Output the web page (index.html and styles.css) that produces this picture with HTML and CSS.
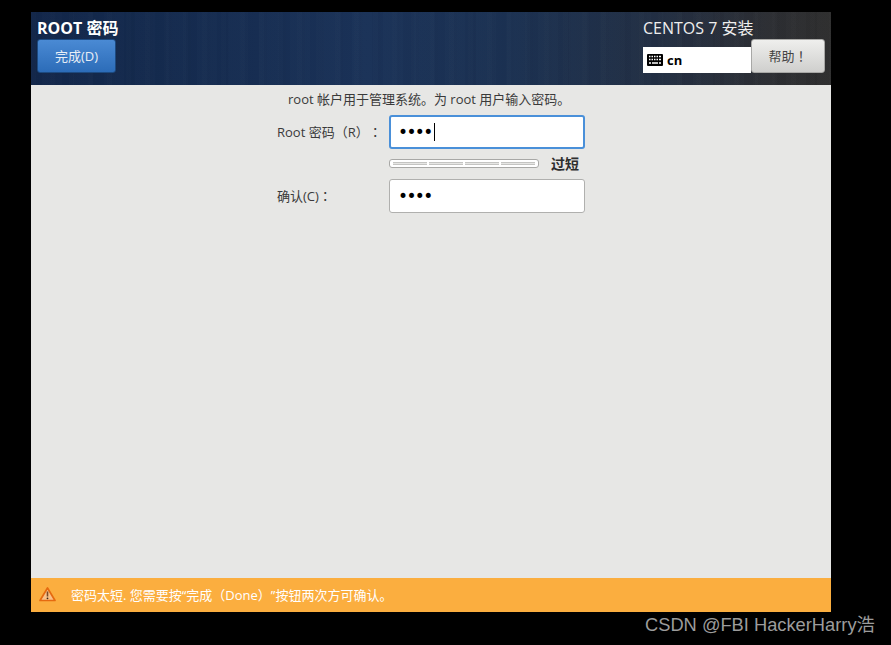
FILE: index.html
```html
<!DOCTYPE html>
<html lang="zh-CN">
<head>
    <meta charset="UTF-8">
    <title>ROOT 密码</title>
    <link rel="stylesheet" href="styles.css">
</head>
<body>
    <div class="window">
        <!-- Top bar -->
        <header class="topbar">
            <div class="spoke">
                <h1 class="spoke-title">ROOT 密码</h1>
                <button class="done-button">完成(D)</button>
            </div>
            <div class="product">
                <div class="product-title">CENTOS 7 安装</div>
                <div class="product-row">
                    <div class="layout-box">
                        <svg class="kb-icon" width="16" height="12" viewBox="0 0 16 12">
                            <rect x="0" y="0" width="16" height="12" rx="1" fill="#000"/>
                            <path d="M2 2.500h1.500M4.500 2.500H6M7 2.500h1.500M9.500 2.500H11M12 2.500h2M2 5.500h1.500M4.500 5.500H6M7 5.500h1.500M9.500 5.500H11M12 5.500h2M2 9h2M5 9h6M12 9h2" stroke="#fff" stroke-width="1.500" fill="none"/>
                        </svg>
                        <span class="layout-name">cn</span>
                    </div>
                    <button class="help-button" lang="zh-TW">帮助！</button>
                </div>
            </div>
        </header>

        <!-- Password form -->
        <main class="content">
            <p class="intro">root 帐户用于管理系统。为 root 用户输入密码。</p>
            <div class="form">
                <label class="field-label" lang="zh-TW">Root 密码（R）：</label>
                <div class="input focused"><span class="dots">••••</span><span class="caret"></span></div>

                <div class="strength">
                    <div class="meter">
                        <span></span><span></span><span></span><span></span>
                    </div>
                    <span class="strength-label">过短</span>
                </div>

                <label class="field-label" lang="zh-TW">确认(C)：</label>
                <div class="input"><span class="dots">••••</span></div>
            </div>
        </main>

        <!-- Warning bar -->
        <footer class="warning">
            <svg class="warn-icon" width="17" height="15" viewBox="0 0 17 15">
                <path d="M8.500 1 L16 13.500 H1 Z" fill="#f9c188" stroke="#e56a10" stroke-width="1.700" stroke-linejoin="round"/>
                <path d="M8.500 4.500 V9.500" stroke="#7a4a28" stroke-width="1.600"/>
                <circle cx="8.500" cy="11.300" r="0.900" fill="#3a2415"/>
            </svg>
            <span>密码太短. 您需要按“完成（Done）”按钮两次方可确认。</span>
        </footer>
    </div>

    <div class="watermark">CSDN @FBI HackerHarry浩</div>
</body>
</html>
```

FILE: styles.css
```css
/* Basic Reset */
* {
    margin: 0;
    padding: 0;
    box-sizing: border-box;
}

body {
    font-family: 'Open Sans', 'Noto Sans CJK SC', sans-serif;
    height: 645px;
    background: #000;
    padding: 12px 0 0 31px;
    overflow: hidden;
    text-spacing-trim: space-all;
}

.window {
    width: 800px;
    height: 600px;
    display: flex;
    flex-direction: column;
    background: #e7e7e5;
}

/* Top bar */
.topbar {
    height: 73px;
    display: flex;
    justify-content: space-between;
    padding: 6px 6px 12px 6px;
    color: #fff;
    background:
        repeating-linear-gradient(90deg, rgba(255, 255, 255, 0.006) 0 5px, rgba(0, 0, 0, 0.012) 5px 8px, rgba(255, 255, 255, 0) 8px 19px),
        repeating-linear-gradient(90deg, rgba(0, 0, 0, 0.012) 0 11px, rgba(255, 255, 255, 0.006) 11px 31px),
        linear-gradient(90deg, #12264a 0%, #142a4e 15%, #1a3258 42%, #1b3152 60%, #222f44 78%, #2c2e33 92%, #2e2e2e 100%);
}

.spoke-title {
    font-size: 16px;
    font-weight: 700;
    line-height: 20px;
}

.done-button {
    display: block;
    width: 79px;
    height: 34px;
    margin-top: 1px;
    padding-bottom: 2px;
    font: inherit;
    font-size: 13px;
    color: #e8eef6;
    background: linear-gradient(to bottom, #4a8ad4, #2c6cb8);
    border: 1px solid #1d4a80;
    border-radius: 3px;
}

.product {
    width: 182px;
}

.product-title {
    font-size: 16px;
    line-height: 20px;
    color: #eee;
}

.product-row {
    display: flex;
    align-items: flex-end;
}

.layout-box {
    width: 108px;
    height: 26px;
    display: flex;
    align-items: center;
    gap: 4px;
    padding-left: 4px;
    margin-top: 9px;
    background: #fff;
    color: #000;
}

.layout-name {
    font-size: 13px;
    font-weight: 700;
}

.help-button {
    width: 74px;
    height: 34px;
    padding-bottom: 2px;
    font-family: 'Open Sans', 'Noto Sans CJK TC', sans-serif;
    font-size: 13px;
    color: #444;
    background: linear-gradient(to bottom, #efefed, #cfcfcd);
    border: 1px solid #a8a8a6;
    border-radius: 3px;
}

/* Password form */
.content {
    flex: 1;
    padding-top: 6px;
    color: #3a3a3a;
    font-size: 13px;
}

.intro {
    line-height: 17px;
    margin-left: 257px;
}

.form {
    display: grid;
    grid-template-columns: 112px 196px;
    margin: 7px 0 0 246px;
    align-items: center;
}

.field-label {
    font-family: 'Open Sans', 'Noto Sans CJK TC', sans-serif;
    font-size: 13px;
    padding-bottom: 2px;
}

.input {
    height: 34px;
    display: flex;
    align-items: center;
    padding-left: 8px;
    background: #fff;
    border: 1px solid #b0b0ae;
    border-radius: 3px;
}

.input.focused {
    border: 2px solid #4a90d9;
    padding-left: 7px;
}

.dots {
    font-size: 17px;
    color: #000;
    letter-spacing: -1.600px;
    font-family: 'DejaVu Sans', sans-serif;
    line-height: 1;
}

.caret {
    width: 1px;
    height: 18px;
    margin-left: 2px;
    background: #000;
}

.strength {
    grid-column: 2;
    display: flex;
    align-items: center;
    height: 30px;
}

.meter {
    width: 150px;
    height: 9px;
    margin-bottom: 1px;
    display: flex;
    gap: 2px;
    padding: 2px 3px;
    background: #fff;
    border: 1px solid #a8a8a6;
    border-radius: 3px;
}

.meter span {
    flex: 1;
    background: #e6e6e4;
    border-top: 1px solid #c4c4c2;
    border-bottom: 1px solid #c4c4c2;
}

.strength-label {
    margin-left: 12px;
    padding-bottom: 2px;
    font-size: 14px;
    font-weight: 700;
    color: #2e2e2e;
}

/* Warning bar */
.warning {
    height: 34px;
    display: flex;
    align-items: center;
    gap: 15px;
    padding: 0 0 2px 8px;
    background: #fbae3f;
    color: #fff;
    font-size: 13px;
}

.watermark {
    position: absolute;
    left: 645px;
    top: 612px;
    font-family: 'Liberation Sans', 'Noto Sans CJK SC', sans-serif;
    font-size: 18.300px;
    line-height: 25px;
    color: #9c9c9c;
    white-space: nowrap;
}
```
